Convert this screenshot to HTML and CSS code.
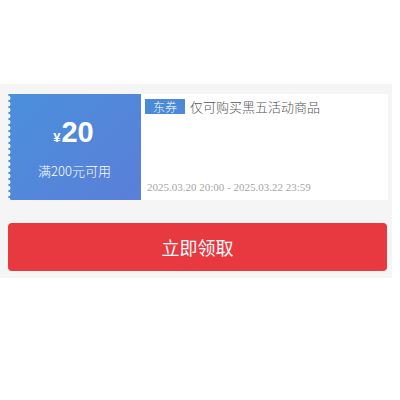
FILE: index.html
```html
<!DOCTYPE html>
<html lang="zh">
<head>
  <meta charset="UTF-8">
  <title>优惠券</title>
  <link rel="stylesheet" href="styles.css">
</head>
<body>
  <div class="coupon-box">
    <div class="coupon">
      <div class="coupon-left">
        <div class="amount"><span class="yen">¥</span>20</div>
        <div class="limit">满200元可用</div>
      </div>
      <div class="coupon-right">
        <div class="title"><span class="tag">东券</span>仅可购买黑五活动商品</div>
        <div class="date">2025.03.20 20:00 - 2025.03.22 23:59</div>
      </div>
    </div>
    <button class="get-btn">立即领取</button>
  </div>
</body>
</html>
```
FILE: styles.css
```css
body {
  margin: 0;
  padding: 84px 0 0;
  background: #fff;
  font-family: "Noto Sans CJK SC", "Liberation Sans", sans-serif;
}

.coupon-box {
  width: 392px;
  background: #f5f5f6;
  padding: 10px 0 7px 8px;
  box-sizing: border-box;
}

.coupon {
  display: flex;
  width: 380px;
  height: 106px;
  background: #fff;
}

.coupon-left {
  position: relative;
  width: 133px;
  background: linear-gradient(135deg, #4a8fdc 0%, #5b7fd8 100%);
  color: #fff;
  display: flex;
  flex-direction: column;
  align-items: center;
  justify-content: center;
}

/* 锯齿边 */
.coupon-left::before {
  content: "";
  position: absolute;
  left: 0;
  top: 0;
  bottom: 0;
  width: 3px;
  background: radial-gradient(circle at 0 50%, #eef4fb 2.2px, transparent 2.8px) 0 1px / 3px 6px repeat-y;
}

.amount {
  font-family: "Liberation Sans", sans-serif;
  font-weight: bold;
  font-size: 29px;
  line-height: 30px;
  margin-top: 2px;
  margin-left: -2px;
}

.yen {
  font-size: 13px;
  margin-right: 1px;
}

.limit {
  font-size: 13px;
  margin-top: 8px;
  font-weight: 300;
}

.coupon-right {
  flex: 1;
  padding: 5px 6px 0 4px;
  display: flex;
  flex-direction: column;
  justify-content: space-between;
}

.title {
  font-size: 13px;
  color: #555;
  line-height: 15px;
  font-weight: 300;
}

.tag {
  display: inline-block;
  background: #4a8ad6;
  color: #fff;
  font-size: 12px;
  line-height: 15px;
  padding: 0 8px;
  margin-right: 5px;
  vertical-align: top;
}

.date {
  font-family: "Liberation Serif", serif;
  font-size: 11px;
  color: #a6a6a6;
  margin: 0 0 7px 2px;
}

.get-btn {
  display: block;
  margin-top: 23px;
  width: 379px;
  height: 48px;
  border: none;
  border-radius: 4px;
  background: #e7393f;
  color: #fff;
  font-family: inherit;
  font-size: 18px;
}
```
